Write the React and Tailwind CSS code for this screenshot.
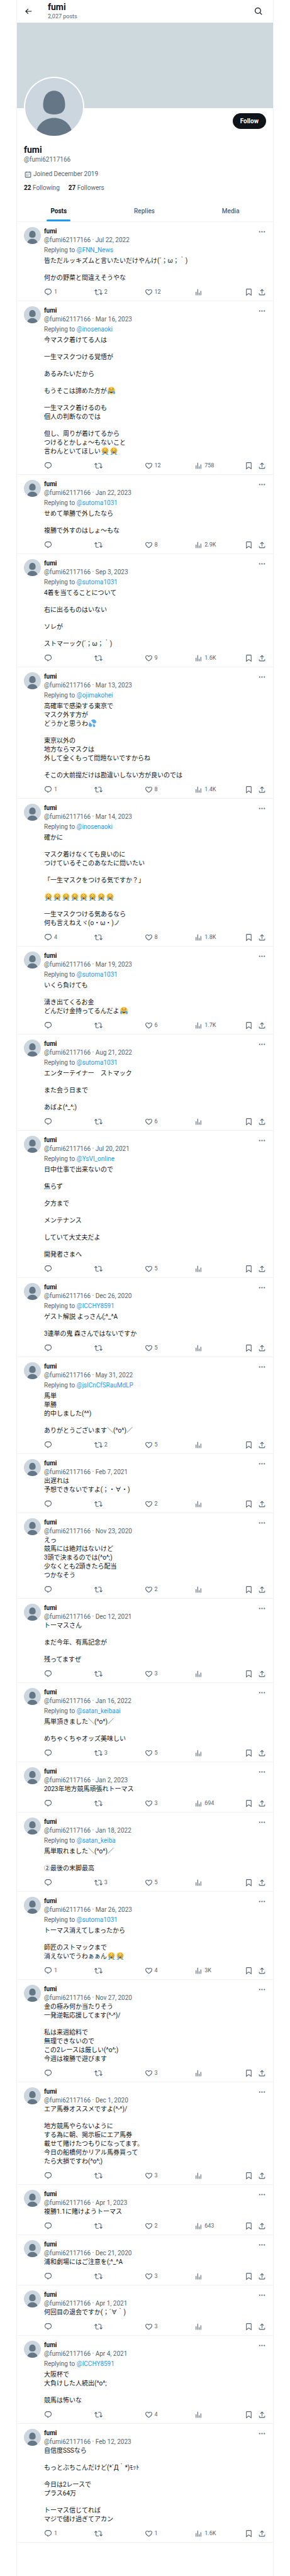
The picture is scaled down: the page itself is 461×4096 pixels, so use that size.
import { Fragment } from 'react'

const ICONS = {
  back: 'M7.414 13l5.043 5.04-1.414 1.42L3.586 12l7.457-7.46 1.414 1.42L7.414 11H21v2H7.414z',
  search: 'M10.25 3.75c-3.59 0-6.5 2.91-6.5 6.5s2.91 6.5 6.5 6.5c1.795 0 3.419-.726 4.596-1.904 1.178-1.177 1.904-2.801 1.904-4.596 0-3.59-2.91-6.5-6.5-6.5zm-8.5 6.5c0-4.694 3.806-8.5 8.5-8.5s8.5 3.806 8.5 8.5c0 1.986-.682 3.815-1.824 5.262l4.781 4.781-1.414 1.414-4.781-4.781c-1.447 1.142-3.276 1.824-5.262 1.824-4.694 0-8.5-3.806-8.5-8.5z',
  calendar: 'M7 4V3h2v1h6V3h2v1h1.5C19.89 4 21 5.12 21 6.5v12c0 1.38-1.11 2.5-2.5 2.5h-13C4.12 21 3 19.88 3 18.5v-12C3 5.12 4.12 4 5.5 4H7zm0 2H5.5c-.27 0-.5.22-.5.5v12c0 .28.23.5.5.5h13c.28 0 .5-.22.5-.5v-12c0-.28-.22-.5-.5-.5H17v1h-2V6H9v1H7V6zm0 6h2v-2H7v2zm0 4h2v-2H7v2zm4-4h2v-2h-2v2zm0 4h2v-2h-2v2zm4-4h2v-2h-2v2z',
  more: 'M3 12c0-1.1.9-2 2-2s2 .9 2 2-.9 2-2 2-2-.9-2-2zm9 2c1.1 0 2-.9 2-2s-.9-2-2-2-2 .9-2 2 .9 2 2 2zm7 0c1.1 0 2-.9 2-2s-.9-2-2-2-2 .9-2 2 .9 2 2 2z',
  reply: 'M1.751 10c0-4.42 3.584-8 8.005-8h4.366c4.49 0 8.129 3.64 8.129 8.13 0 2.96-1.607 5.68-4.196 7.11l-8.054 4.46v-3.69h-.067c-4.49.1-8.183-3.51-8.183-8.01zm8.005-6c-3.317 0-6.005 2.69-6.005 6 0 3.37 2.77 6.08 6.138 6.01l.351-.01h1.761v2.3l5.087-2.81c1.951-1.08 3.163-3.13 3.163-5.36 0-3.39-2.744-6.13-6.129-6.13H9.756z',
  repost: 'M4.5 3.88l4.432 4.14-1.364 1.46L5.5 7.55V16c0 1.1.896 2 2 2H13v2H7.5c-2.209 0-4-1.79-4-4V7.55L1.432 9.48.068 8.02 4.5 3.88zM16.5 6H11V4h5.5c2.209 0 4 1.79 4 4v8.45l2.068-1.93 1.364 1.46-4.432 4.14-4.432-4.14 1.364-1.46 2.068 1.93V8c0-1.1-.896-2-2-2z',
  like: 'M16.697 5.5c-1.222-.06-2.679.51-3.89 2.16l-.805 1.09-.806-1.09C9.984 6.01 8.526 5.44 7.304 5.5c-1.243.07-2.349.78-2.91 1.91-.552 1.12-.633 2.78.479 4.82 1.074 1.97 3.257 4.27 7.129 6.61 3.87-2.34 6.052-4.64 7.126-6.61 1.111-2.04 1.03-3.7.477-4.82-.561-1.13-1.666-1.84-2.908-1.91zm4.187 7.69c-1.351 2.48-4.001 5.12-8.379 7.67l-.503.3-.504-.3c-4.379-2.55-7.029-5.19-8.382-7.67-1.36-2.5-1.41-4.86-.514-6.67.887-1.79 2.647-2.91 4.601-3.01 1.651-.09 3.368.56 4.798 2.01 1.429-1.45 3.146-2.1 4.796-2.01 1.954.1 3.714 1.22 4.601 3.01.896 1.81.846 4.17-.514 6.67z',
  views: 'M8.75 21V3h2v18h-2zM18 21V8.5h2V21h-2zM4 21l.004-10h2L6 21H4zm9.248 0v-7h2v7h-2z',
  bookmark: 'M4 4.5C4 3.12 5.119 2 6.5 2h11C18.881 2 20 3.12 20 4.5v18.44l-8-5.71-8 5.71V4.5zM6.5 4c-.276 0-.5.22-.5.5v14.56l6-4.29 6 4.29V4.5c0-.28-.224-.5-.5-.5h-11z',
  share: 'M12 2.59l5.7 5.7-1.41 1.42L13 6.41V16h-2V6.41l-3.3 3.3-1.41-1.42L12 2.59zM21 15l-.02 3.51c0 1.38-1.12 2.49-2.5 2.49H5.5C4.11 21 3 19.88 3 18.5V15h2v3.5c0 .28.22.5.5.5h12.98c.28 0 .5-.22.5-.5L19 15h2z',
}

// An empty line in text starts a new paragraph
const POSTS = [
  { date: 'Jul 22, 2022', to: 'FNN_News', replies: '1', reposts: '2', likes: '12', text: `皆ただルッキズムと言いたいだけやんけ(´；ω；｀)

何かの野菜と間違えそうやな` },
  { date: 'Mar 16, 2023', to: 'inosenaoki', likes: '12', views: '758', text: `今マスク着けてる人は

一生マスクつける覚悟が

あるみたいだから

もうそこは諦めた方が😂

一生マスク着けるのも
個人の判断なのでは

但し、周りが着けてるから
つけるとかしょ〜もないこと
言わんといてほしい😭😭` },
  { date: 'Jan 22, 2023', to: 'sutoma1031', likes: '8', views: '2.9K', text: `せめて単勝で外したなら

複勝で外すのはしょ〜もな` },
  { date: 'Sep 3, 2023', to: 'sutoma1031', likes: '9', views: '1.6K', text: `4着を当てることについて

右に出るものはいない

ソレが

ストマーック(´；ω；｀)` },
  { date: 'Mar 13, 2023', to: 'ojimakohei', replies: '1', likes: '8', views: '1.4K', text: `高確率で感染する東京で
マスク外す方が
どうかと思うわ💦

東京以外の
地方ならマスクは
外して全くもって問題ないですからね

そこの大前提だけは勘違いしない方が良いのでは` },
  { date: 'Mar 14, 2023', to: 'inosenaoki', replies: '4', likes: '8', views: '1.8K', text: `確かに

マスク着けなくても良いのに
つけているそこのあなたに問いたい

「一生マスクをつける気ですか？」

😭😭😭😭😭😭😭😭

一生マスクつける気あるなら
何も言えねえヾ(o・ω・)ノ` },
  { date: 'Mar 19, 2023', to: 'sutoma1031', likes: '6', views: '1.7K', text: `いくら負けても

湧き出てくるお金
どんだけ金持ってるんだよ😂` },
  { date: 'Aug 21, 2022', to: 'sutoma1031', likes: '6', text: `エンターテイナー　ストマック

また会う日まで

あばよ(^_^;)` },
  { date: 'Jul 20, 2021', to: 'YsVI_online', likes: '5', text: `日中仕事で出来ないので

焦らず

夕方まで

メンテナンス

していて大丈夫だよ

開発者さまへ` },
  { date: 'Dec 26, 2020', to: 'ICCHY8591', likes: '5', text: `ゲスト解説 よっさん(;^_^A

3連単の鬼 森さんではないですか` },
  { date: 'May 31, 2022', to: 'jslCnCfSRauMdLP', reposts: '2', likes: '5', text: `馬単
単勝
的中しました(^^)

ありがとうございます＼(^o^)／` },
  { date: 'Feb 7, 2021', likes: '2', text: `出遅れは
予想できないですよ(；・∀・)` },
  { date: 'Nov 23, 2020', likes: '2', text: `えっ
競馬には絶対はないけど
3頭で決まるのでは(^o^;)
少なくとも2頭きたら配当
つかなそう` },
  { date: 'Dec 12, 2021', likes: '3', text: `トーマスさん

まだ今年、有馬記念が

残ってますぜ` },
  { date: 'Jan 16, 2022', to: 'satan_keibaai', reposts: '3', likes: '5', text: `馬単頂きました＼(^o^)／

めちゃくちゃオッズ美味しい` },
  { date: 'Jan 2, 2023', likes: '3', views: '694', text: `2023年地方競馬頑張れトーマス` },
  { date: 'Jan 18, 2022', to: 'satan_keiba', reposts: '3', likes: '5', text: `馬単取れました＼(^o^)／

②最後の末脚最高` },
  { date: 'Mar 26, 2023', to: 'sutoma1031', replies: '1', likes: '4', views: '3K', text: `トーマス消えてしまったから

師匠のストマックまで
消えないでうわぁぁん😭😭` },
  { date: 'Nov 27, 2020', likes: '3', text: `金の極み何か当たりそう
一発逆転応援してます(^-^)/

私は来週給料で
無理できないので
この2レースは厳しい(^o^;)
今週は複勝で遊びます` },
  { date: 'Dec 1, 2020', likes: '3', text: `エア馬券オススメですよ(^-^)/

地方競馬やらないように
する為に朝、掲示板にエア馬券
載せて賭けたつもりになってます。
今日の船橋何かリアル馬券買って
たら大損ですわ(^o^;)` },
  { date: 'Apr 1, 2023', likes: '2', views: '643', text: `複勝1.1に賭けようトーマス` },
  { date: 'Dec 21, 2020', likes: '3', text: `浦和劇場にはご注意を(;^_^A` },
  { date: 'Apr 1, 2021', likes: '3', text: `何回目の退会ですか(；´∀｀)` },
  { date: 'Apr 4, 2021', to: 'ICCHY8591', likes: '4', text: `大阪杯で
大負けした人続出(^o^;

競馬は怖いな` },
  { date: 'Feb 12, 2023', replies: '1', likes: '1', views: '1.6K', text: `自信度SSSなら

もっとぶちこんだけど(*´Д｀*)ﾓｯﾄ

今日は2レースで
プラス64万

トーマス信じてれば
マジで儲け過ぎてアカン` },
]

export default function App() {
  return (
    <div className="min-h-screen bg-white px-[26px] font-[Roboto,'Noto_Sans_CJK_JP',sans-serif] text-[10px] leading-[14px] text-[#0f1419]">
      <main className="min-h-screen border-x border-[#eff3f4]">
        <header className="flex h-9 items-center pl-[11px] pr-4">
          <button aria-label="Back" className="w-[38px]"><Icon name="back" className="size-[14px]" /></button>
          <div className="flex-1">
            <h2 className="text-[14px] leading-4 font-bold">fumi</h2>
            <p className="text-[9px] leading-[14px] text-[#536471]">2,027 posts</p>
          </div>
          <button aria-label="Search"><Icon name="search" className="size-[14px]" /></button>
        </header>
        <Profile />
        <nav className="flex h-[35px] border-b border-[#eff3f4]">
          <Tab label="Posts" active />
          <Tab label="Replies" />
          <Tab label="Media" />
        </nav>
        {POSTS.map((post) => <Post key={post.date} post={post} />)}
      </main>
    </div>
  )
}

function Profile() {
  return (
    <section>
      <div className="h-[136px] bg-[#cdd9dd]" />
      <div className="flex items-start justify-between px-[11px] pt-2">
        <div className="-mt-[58px] rounded-full bg-white p-[2px]">
          <Avatar className="size-[92px]" />
        </div>
        <button className="h-[25px] rounded-full bg-[#0f1419] px-3 font-bold text-white">Follow</button>
      </div>
      <div className="px-[11px] py-3 text-[#536471]">
        <h1 className="text-[14px] leading-4 font-bold text-[#0f1419]">fumi</h1>
        <p className="pt-px">@fumi62117166</p>
        <p className="flex items-center gap-[2px] pt-[9px]">
          <Icon name="calendar" className="size-[13px]" />
          Joined December 2019
        </p>
        <p className="flex gap-[14px] pt-2">
          <a href="#following"><b className="text-[#0f1419]">22</b> Following</a>
          <a href="#followers"><b className="text-[#0f1419]">27</b> Followers</a>
        </p>
      </div>
    </section>
  )
}

function Tab({ label, active }) {
  return (
    <a href={`#${label.toLowerCase()}`} className="flex flex-auto justify-center px-[11px]">
      <span className={`flex flex-col justify-between ${active ? 'font-bold' : 'font-medium text-[#536471]'}`}>
        <span className="pt-[11px]">{label}</span>
        {active && <span className="-mx-[6px] h-[3px] rounded-full bg-[#1d9bf0]" />}
      </span>
    </a>
  )
}

function Post({ post }) {
  return (
    <article className="flex gap-[5px] border-b border-[#eff3f4] px-[11px] pt-2 pb-[7px]">
      <Avatar className="size-[27px] shrink-0" />
      <div className="min-w-0 flex-1">
        <div className="flex justify-between">
          <span className="font-bold">fumi</span>
          <button aria-label="More" className="text-[#536471]"><Icon name="more" className="size-[13px]" /></button>
        </div>
        <div className="text-[#536471]">@fumi62117166 · {post.date}</div>
        {post.to && (
          <div className="pt-[2px] pb-[3px] text-[#536471]">
            Replying to <a href={`#${post.to}`} className="text-[#1d9bf0]">@{post.to}</a>
          </div>
        )}
        <div className="space-y-[13px]">
          {post.text.split('\n\n').map((paragraph, i) => (
            <p key={i} className="whitespace-pre-wrap">{withEmoji(paragraph)}</p>
          ))}
        </div>
        <div className="flex h-[22px] items-center pt-2 text-[9px] text-[#536471]">
          <Action icon="reply" label="Reply" count={post.replies} />
          <Action icon="repost" label="Repost" count={post.reposts} />
          <Action icon="like" label="Like" count={post.likes} />
          <Action icon="views" label="Views" count={post.views} />
          <div className="flex gap-2">
            <button aria-label="Bookmark"><Icon name="bookmark" className="size-[13px]" /></button>
            <button aria-label="Share"><Icon name="share" className="size-[13px]" /></button>
          </div>
        </div>
      </div>
    </article>
  )
}

function Action({ icon, label, count }) {
  return (
    <div className="flex flex-1">
      <button aria-label={label} className="flex items-center gap-[3px]">
        <Icon name={icon} className="size-[13px]" />
        {count}
      </button>
    </div>
  )
}

function Icon({ name, className }) {
  return (
    <svg viewBox="0 0 24 24" fill="currentColor" aria-hidden="true" className={className}>
      <path d={ICONS[name]} />
    </svg>
  )
}

function Avatar({ className }) {
  return (
    <svg viewBox="0 0 100 100" aria-hidden="true" className={`rounded-full bg-[#cbd6de] ${className}`}>
      <path fill="#657786" d="M50 22c12 0 19 10 19 25 0 11-7 16-19 16s-19-5-19-16c0-15 7-25 19-25z" />
      <path fill="#657786" d="M19 94c3-15 15-25 31-25s28 10 31 25v6H19z" />
    </svg>
  )
}

function withEmoji(text) {
  return text.split(/(😂|😭|💦)/u).map((part, i) => {
    const Drawing = EMOJI[part]
    return Drawing ? <Drawing key={i} /> : <Fragment key={i}>{part}</Fragment>
  })
}

function EmojiSvg({ label, children }) {
  return (
    <svg viewBox="0 0 36 36" role="img" aria-label={label} className="mx-px inline-block size-3 align-[-2px]">
      {children}
    </svg>
  )
}

function Joy() {
  return (
    <EmojiSvg label="😂">
      <circle cx="18" cy="18" r="18" fill="#ffcc4d" />
      <path fill="none" stroke="#664500" strokeWidth="2" strokeLinecap="round" d="M8 14c2-4 6-4 8 0M20 14c2-4 6-4 8 0M8 8l4-2M28 8l-4-2" />
      <path fill="#664500" d="M9 19h18c0 7-3 11-9 11S9 26 9 19z" />
      <path fill="#fff" d="M10 20h16v3H10z" />
      <path fill="#5dadec" d="M9 19c-5 0-9 4-9 9 0 4 2 7 5 7 5 0 5-7 4-16zM27 19c5 0 9 4 9 9 0 4-2 7-5 7-5 0-5-7-4-16z" />
    </EmojiSvg>
  )
}

function Sob() {
  return (
    <EmojiSvg label="😭">
      <circle cx="18" cy="17" r="17" fill="#ffcc4d" />
      <path fill="#5dadec" d="M7 18h5v18H2v-3h5zM29 18h-5v18h10v-3h-5z" />
      <path fill="none" stroke="#664500" strokeWidth="1.6" strokeLinecap="round" d="M7 11c3 0 5-1 7-4M29 11c-3 0-5-1-7-4M6 17c3 1 6 1 9-1M30 17c-3 1-6 1-9-1" />
      <ellipse cx="18" cy="25" rx="4.5" ry="5" fill="#664500" />
      <path fill="#e75a70" d="M14 28c2-3 6-3 8 0-1 2-7 2-8 0z" />
    </EmojiSvg>
  )
}

function SweatDrops() {
  return (
    <EmojiSvg label="💦">
      <g fill="#5dadec">
        <path d="M10 6C17-1 27-1 32 3c5 4 5 12 0 15s-11 1-13-3c-2-5-4-7-9-9z" />
        <path d="M3 13c6 3 13 9 13 15 0 5-4 8-8 7-5 0-8-4-8-9 0-5 3-8 3-13z" />
        <path d="M18 22c6 0 12 2 13 7 1 4-2 7-5 7-4 0-6-3-6-6 0-4 0-5-2-8z" />
      </g>
    </EmojiSvg>
  )
}

const EMOJI = { '😂': Joy, '😭': Sob, '💦': SweatDrops }
